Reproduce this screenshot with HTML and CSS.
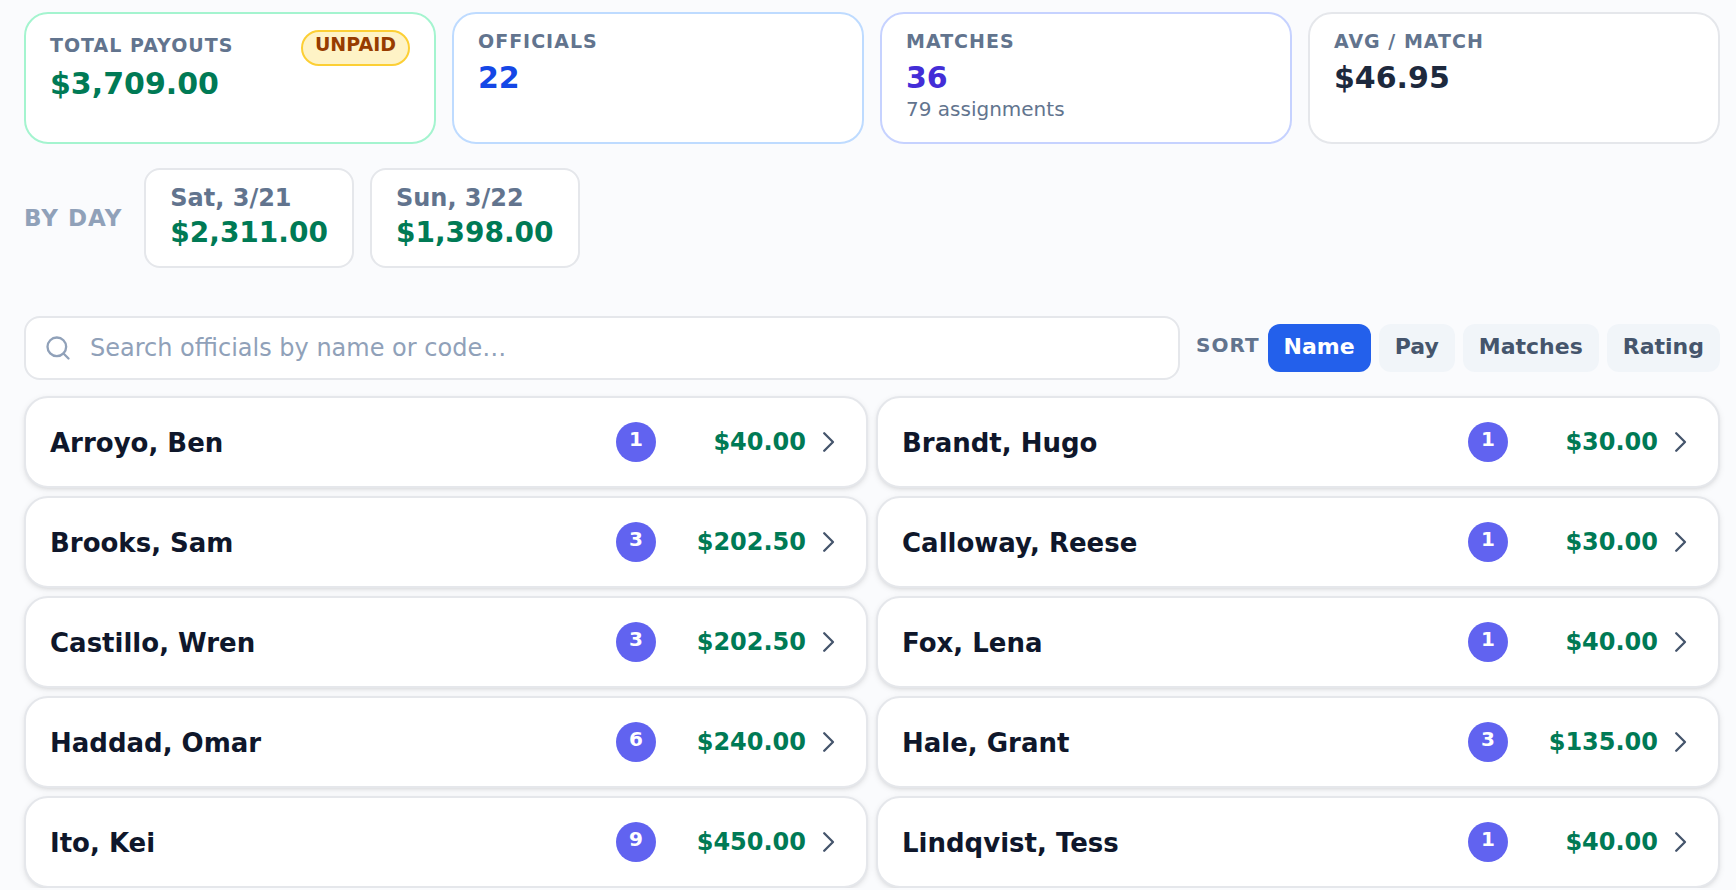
FILE: index.html
```
<!DOCTYPE html>
<html lang="en">
<head>
    <meta charset="UTF-8">
    <meta name="viewport" content="width=device-width, initial-scale=1.0">
    <title>Official payouts</title>
    <link rel="stylesheet" href="styles.css">
</head>
<body>
    <svg class="sprite" aria-hidden="true">
        <symbol id="chevron" viewBox="0 0 24 24">
            <path d="M8.75 4.5l7.5 7.5-7.5 7.5"/>
        </symbol>
    </svg>
    <main>
        <section class="stats">
            <div class="stat green">
                <div class="stat-head">
                    <div class="label">TOTAL PAYOUTS</div>
                    <span class="status">UNPAID</span>
                </div>
                <div class="value">$3,709.00</div>
            </div>
            <div class="stat blue">
                <div class="label">OFFICIALS</div>
                <div class="value">22</div>
            </div>
            <div class="stat indigo">
                <div class="label">MATCHES</div>
                <div class="value">36</div>
                <div class="note">79 assignments</div>
            </div>
            <div class="stat">
                <div class="label">AVG / MATCH</div>
                <div class="value">$46.95</div>
            </div>
        </section>

        <section class="days">
            <h2>BY DAY</h2>
            <div class="day">
                <div class="date">Sat, 3/21</div>
                <div class="total">$2,311.00</div>
            </div>
            <div class="day">
                <div class="date">Sun, 3/22</div>
                <div class="total">$1,398.00</div>
            </div>
        </section>

        <section class="toolbar">
            <label class="search">
                <svg viewBox="0 0 24 24" aria-hidden="true">
                    <circle cx="11" cy="11" r="8"/>
                    <path d="M21 21l-4.3-4.3"/>
                </svg>
                <input type="text" placeholder="Search officials by name or code…" aria-label="Search officials">
            </label>
            <div class="sort">
                <span class="sort-label">SORT</span>
                <button type="button" class="active">Name</button>
                <button type="button">Pay</button>
                <button type="button">Matches</button>
                <button type="button">Rating</button>
            </div>
        </section>

        <section class="officials">
            <button type="button" class="official">
                <span class="name">Arroyo, Ben</span>
                <span class="count">1</span>
                <span class="pay">$40.00</span>
                <svg><use href="#chevron"/></svg>
            </button>
            <button type="button" class="official">
                <span class="name">Brandt, Hugo</span>
                <span class="count">1</span>
                <span class="pay">$30.00</span>
                <svg><use href="#chevron"/></svg>
            </button>
            <button type="button" class="official">
                <span class="name">Brooks, Sam</span>
                <span class="count">3</span>
                <span class="pay">$202.50</span>
                <svg><use href="#chevron"/></svg>
            </button>
            <button type="button" class="official">
                <span class="name">Calloway, Reese</span>
                <span class="count">1</span>
                <span class="pay">$30.00</span>
                <svg><use href="#chevron"/></svg>
            </button>
            <button type="button" class="official">
                <span class="name">Castillo, Wren</span>
                <span class="count">3</span>
                <span class="pay">$202.50</span>
                <svg><use href="#chevron"/></svg>
            </button>
            <button type="button" class="official">
                <span class="name">Fox, Lena</span>
                <span class="count">1</span>
                <span class="pay">$40.00</span>
                <svg><use href="#chevron"/></svg>
            </button>
            <button type="button" class="official">
                <span class="name">Haddad, Omar</span>
                <span class="count">6</span>
                <span class="pay">$240.00</span>
                <svg><use href="#chevron"/></svg>
            </button>
            <button type="button" class="official">
                <span class="name">Hale, Grant</span>
                <span class="count">3</span>
                <span class="pay">$135.00</span>
                <svg><use href="#chevron"/></svg>
            </button>
            <button type="button" class="official">
                <span class="name">Ito, Kei</span>
                <span class="count">9</span>
                <span class="pay">$450.00</span>
                <svg><use href="#chevron"/></svg>
            </button>
            <button type="button" class="official">
                <span class="name">Lindqvist, Tess</span>
                <span class="count">1</span>
                <span class="pay">$40.00</span>
                <svg><use href="#chevron"/></svg>
            </button>
        </section>
    </main>
</body>
</html>
```
FILE: styles.css
```
*, *:before, *:after {
    box-sizing: border-box;
}
body {
    margin: 0;
    padding: 12px 16px 0 24px;
    background: #fafbfd;
    color: #0f172b;
    font-family: "DejaVu Sans", sans-serif;
}
button, input {
    font-family: inherit;
}
button {
    cursor: pointer;
    border: none;
}
.sprite {
    display: none;
}

/* summary cards */
.stats {
    display: grid;
    grid-template-columns: repeat(4, 1fr);
    gap: 16px;
}
.stat {
    min-height: 132px;
    padding: 16px 24px 12px;
    background: white;
    border: 2px solid #e5e7eb;
    border-radius: 24px;
    color: #1d293d;
}
.label {
    color: #62748e;
    font-size: 19px;
    font-weight: 700;
    line-height: 22px;
    letter-spacing: 1px;
}
.stat > .label {
    margin-bottom: 8px;
}
.stat.green {
    border-color: #a4f4cf;
}
.stat.blue {
    border-color: #bedbff;
}
.stat.indigo {
    border-color: #c6d2ff;
}
.stat-head {
    display: flex;
    justify-content: space-between;
    align-items: center;
}
.stat-head .label {
    padding-bottom: 6px;
}
.value {
    font-size: 30px;
    font-weight: 700;
    line-height: 36px;
}
.green .value, .total, .pay {
    color: #007a55;
}
.blue .value {
    color: #1447e6;
}
.indigo .value {
    color: #432dd7;
}
.note {
    color: #62748e;
    font-size: 20px;
    line-height: 26px;
}
.status {
    padding: 0 12px 8px;
    border: 2px solid #fccf35;
    border-radius: 18px;
    background: #fef3c6;
    color: #973c00;
    font-size: 19px;
    font-weight: 700;
    line-height: 24px;
}

/* totals by day */
.days {
    display: flex;
    align-items: center;
    gap: 16px;
    margin-top: 24px;
}
.days h2 {
    margin: 0 6px 0 0;
    color: #90a1b9;
    font-size: 23px;
    letter-spacing: 1px;
}
.day {
    padding: 12px 24px 14px;
    background: white;
    border: 2px solid #e5e7eb;
    border-radius: 16px;
    font-weight: 700;
}
.date {
    color: #62748e;
    font-size: 24px;
    line-height: 32px;
}
.total {
    font-size: 28px;
    line-height: 38px;
}

/* search and sort */
.toolbar {
    display: flex;
    align-items: center;
    gap: 16px;
    margin-top: 48px;
}
.search {
    flex: 1;
    display: flex;
    align-items: center;
    gap: 18px;
    height: 64px;
    padding: 0 18px;
    background: white;
    border: 2px solid #e5e7eb;
    border-radius: 16px;
}
.search svg {
    width: 28px;
    height: 28px;
    fill: none;
    stroke: #90a1b9;
    stroke-width: 2;
    stroke-linecap: round;
}
.search input {
    flex: 1;
    padding: 0;
    border: none;
    outline: none;
    background: none;
    font-size: 24px;
}
.search input::placeholder {
    color: #90a1b9;
}
.sort {
    display: flex;
    align-items: center;
    gap: 8px;
}
.sort-label {
    padding-bottom: 6px;
    color: #62748e;
    font-size: 20px;
    font-weight: 700;
    letter-spacing: 1px;
}
.sort button {
    height: 48px;
    padding: 0 16px 4px;
    border-radius: 12px;
    background: #f1f5f9;
    color: #45556c;
    font-size: 22px;
    font-weight: 700;
}
.sort button.active {
    background: #2360eb;
    color: white;
}

/* list of officials */
.officials {
    display: grid;
    grid-template-columns: repeat(2, 1fr);
    gap: 8px;
    margin-top: 16px;
}
.official {
    display: flex;
    align-items: center;
    min-height: 92px;
    padding: 0 24px;
    background: white;
    border: 2px solid #e5e7eb;
    border-radius: 24px;
    box-shadow: 0 2px 6px rgba(0, 0, 0, 0.08), 0 2px 4px -2px rgba(0, 0, 0, 0.1);
    color: #0f172b;
    font-weight: 700;
    text-align: left;
}
.name {
    flex: 1;
    padding-top: 2px;
    font-size: 26px;
}
.count {
    width: 40px;
    height: 40px;
    border-radius: 50%;
    background: #6163f0;
    color: white;
    font-size: 20px;
    line-height: 34px;
    text-align: center;
}
.pay {
    width: 150px;
    font-size: 24px;
    text-align: right;
}
.official svg {
    width: 28px;
    height: 28px;
    margin-left: 8px;
    fill: none;
    stroke: #45556c;
    stroke-width: 2;
    stroke-linecap: round;
    stroke-linejoin: round;
}
```
